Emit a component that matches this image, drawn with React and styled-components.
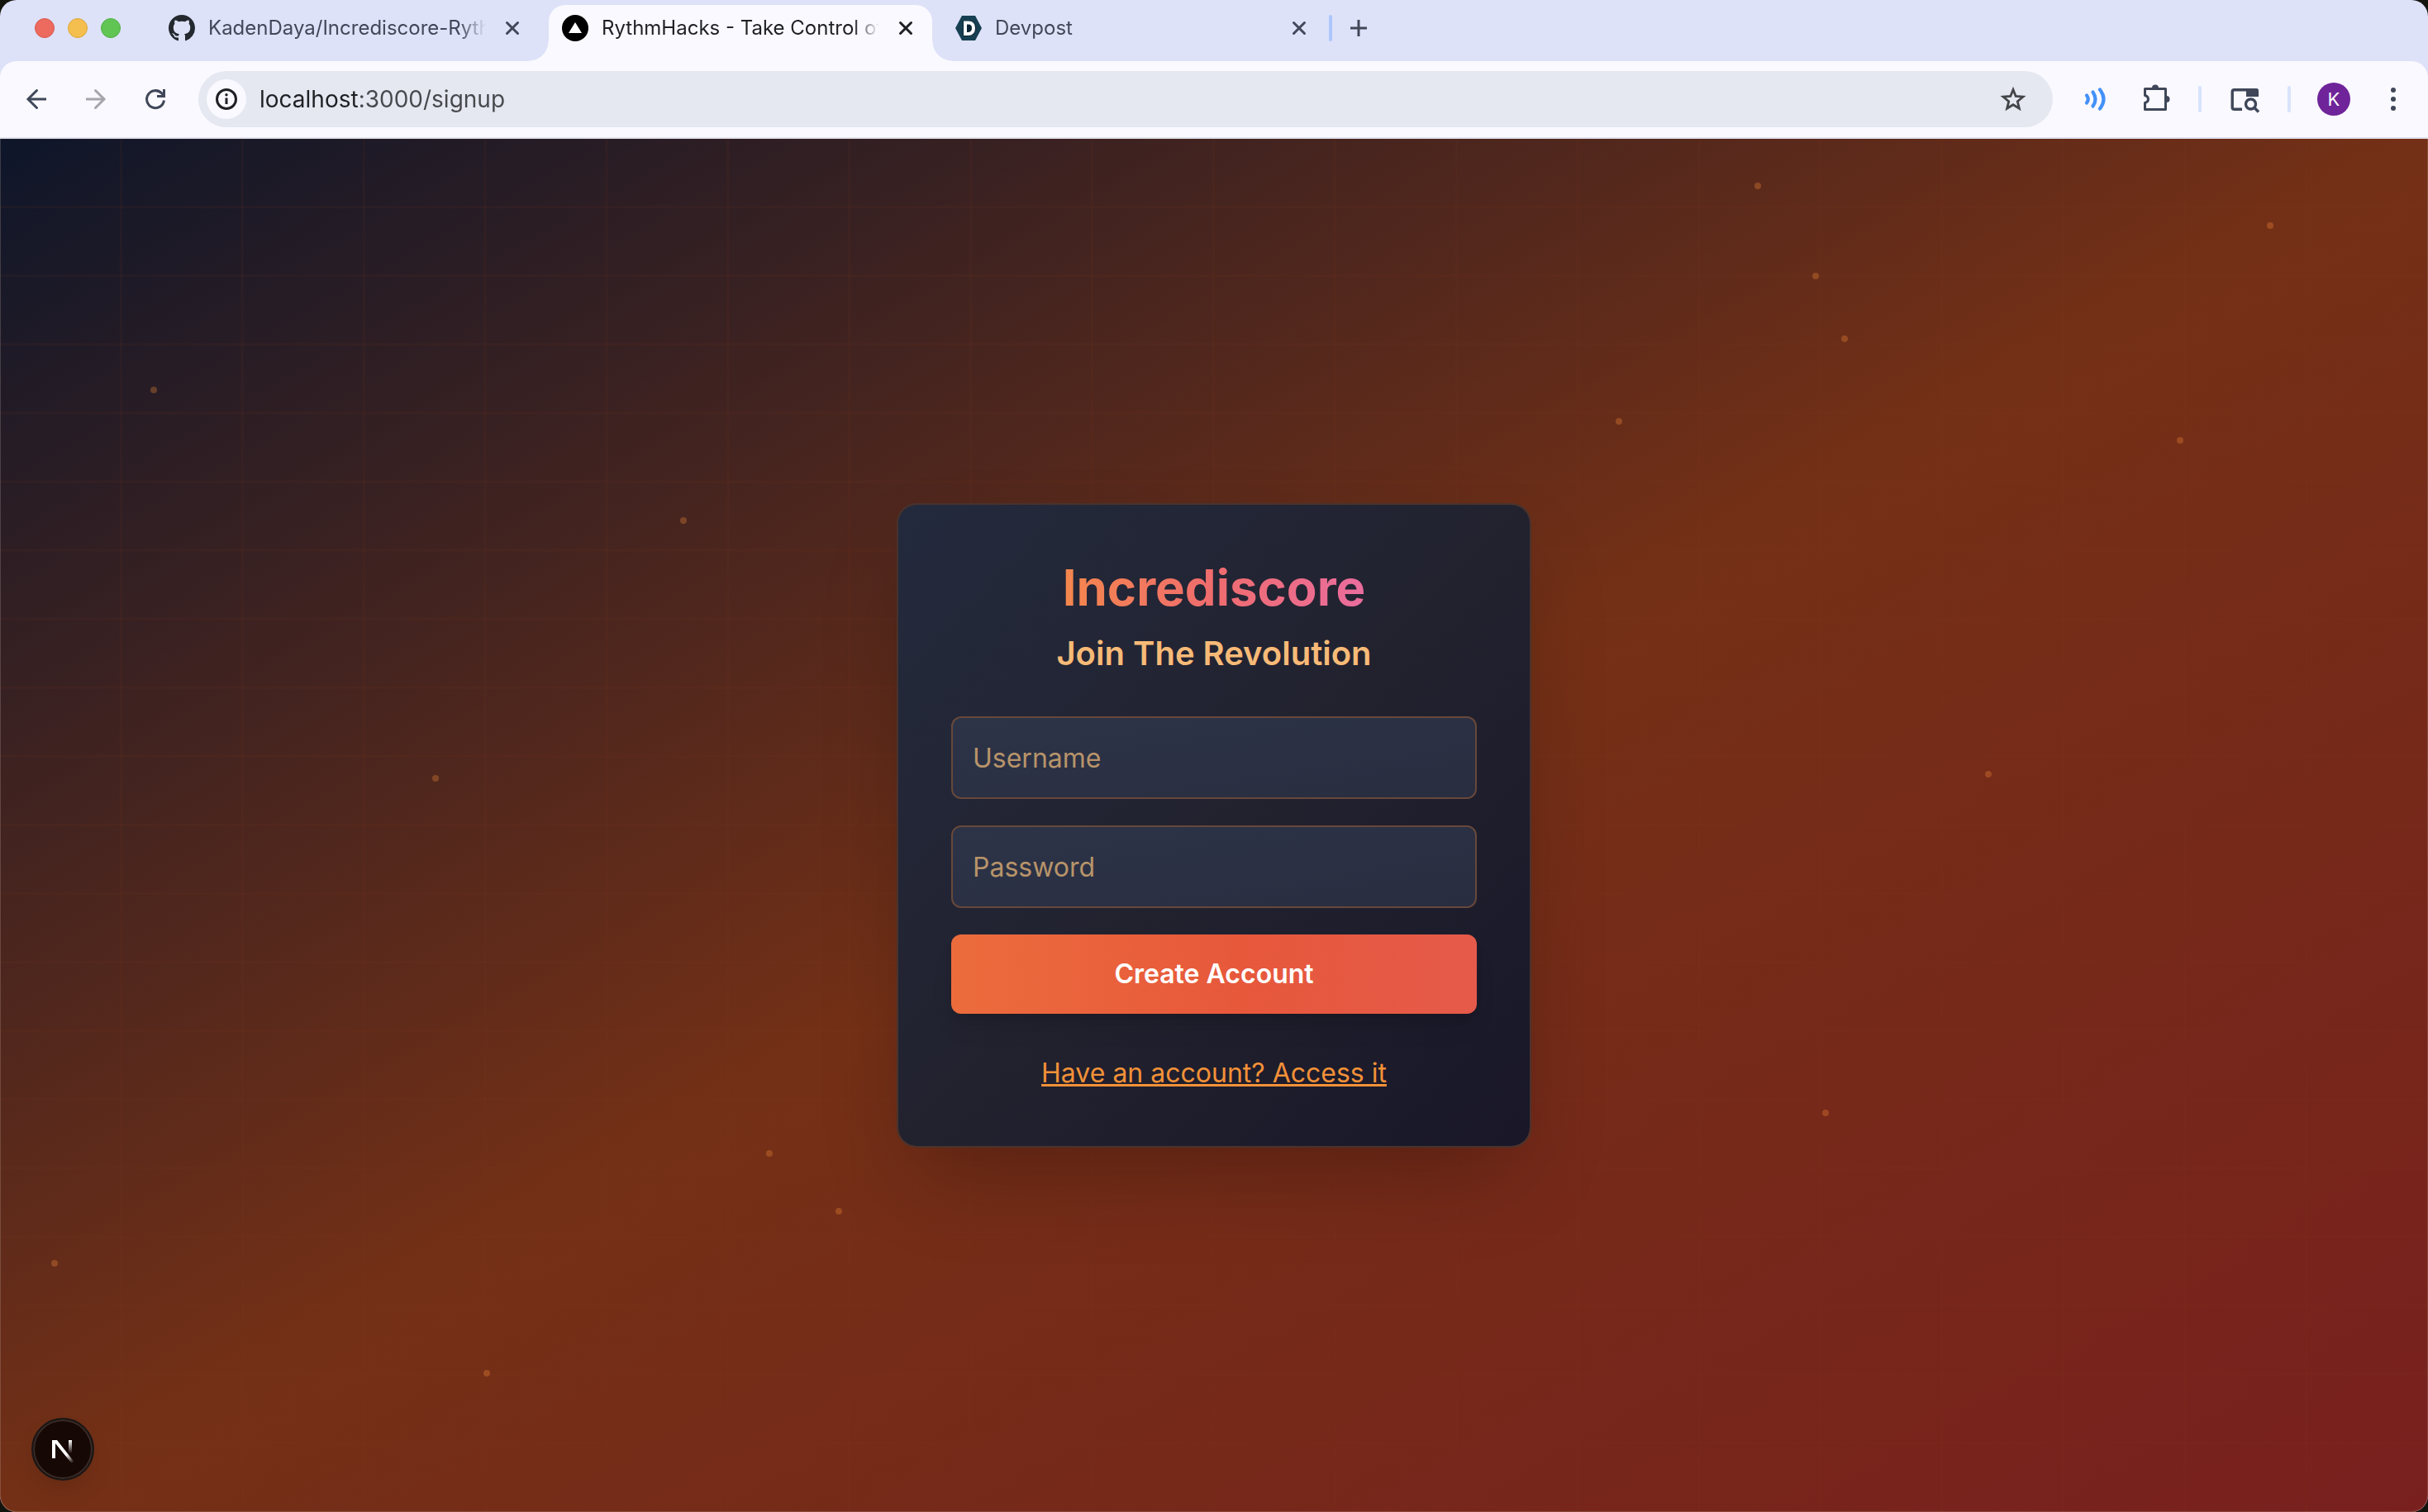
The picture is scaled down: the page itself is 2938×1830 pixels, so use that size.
import React from 'react';
import styled, { createGlobalStyle } from 'styled-components';

const GlobalStyle = createGlobalStyle`
  *, *::before, *::after { box-sizing: border-box; }
  body {
    margin: 0;
    background: #14140f;
    font-family: Inter, "Liberation Sans", sans-serif;
    -webkit-font-smoothing: antialiased;
  }
  button, input { font: inherit; color: inherit; }
  button { border: 0; padding: 0; background: none; cursor: pointer; }
  svg { display: block; flex: none; }
`;

const Window = styled.div`
  min-height: 100vh;
  display: flex;
  flex-direction: column;
  overflow: hidden;
  border-radius: 20px;
  background: #dde2f8;
`;

/* ---------- tab strip ---------- */

const TabStrip = styled.header`
  height: 74px;
  display: flex;
  align-items: flex-start;
  padding: 6px 42px 0;
`;

const StripItem = styled.div`
  height: 56px;
  display: flex;
  align-items: center;
`;

const WindowControls = styled(StripItem)`
  gap: 16px;
  margin-right: 42px;
`;

const Light = styled.button`
  width: 24px;
  height: 24px;
  border-radius: 50%;
  border: 1px solid ${(p) => p.$edge};
  background: ${(p) => p.$fill};
`;

const Tabs = styled.nav`
  display: flex;
  gap: 12px;
`;

const TabBox = styled.div`
  position: relative;
  width: 464px;
  height: 68px;
  display: flex;
  align-items: center;
  gap: 16px;
  padding: 0 16px 12px;
  color: ${(p) => (p.$active ? '#1f2024' : '#434759')};
  background: ${(p) => (p.$active ? '#faf9ff' : 'transparent')};
  border-radius: 20px 20px 0 0;

  &::before,
  &::after {
    content: '';
    display: ${(p) => (p.$active ? 'block' : 'none')};
    position: absolute;
    bottom: 0;
    width: 24px;
    height: 24px;
  }
  &::before {
    right: 100%;
    background: radial-gradient(circle at 0 0, transparent 23px, #faf9ff 24px);
  }
  &::after {
    left: 100%;
    background: radial-gradient(circle at 100% 0, transparent 23px, #faf9ff 24px);
  }
`;

const TabTitle = styled.button`
  flex: 1;
  min-width: 0;
  overflow: hidden;
  text-align: left;
  white-space: nowrap;
  font-size: 24px;
  line-height: 32px;
  mask-image: linear-gradient(to left, transparent, #000 32px);
`;

const IconButton = styled.button`
  width: ${(p) => p.$size || 40}px;
  height: ${(p) => p.$size || 40}px;
  flex: none;
  display: flex;
  align-items: center;
  justify-content: center;
  color: ${(p) => p.$color || '#3f4759'};
`;

const Divider = styled.span`
  flex: none;
  width: 4px;
  height: 32px;
  border-radius: 2px;
  background: ${(p) => p.$color};
`;

const StripEnd = styled(StripItem)`
  gap: 16px;
  margin-left: 4px;
`;

/* ---------- toolbar ---------- */

const Toolbar = styled.div`
  height: 94px;
  display: flex;
  align-items: center;
  gap: 32px;
  padding: 0 22px 0 24px;
  background: #faf9ff;
  border-bottom: 2px solid #e0e2ee;
  border-radius: 20px 20px 0 0;
`;

const Omnibox = styled.form`
  flex: 1;
  height: 68px;
  display: flex;
  align-items: center;
  gap: 16px;
  padding: 0 28px 0 10px;
  border-radius: 34px;
  background: #e5e8f1;
`;

const SiteInfo = styled(IconButton)`
  border-radius: 50%;
  background: #faf9ff;
`;

const Address = styled.input`
  flex: 1;
  min-width: 0;
  padding: 0;
  border: 0;
  outline: 0;
  font-size: 28px;
  line-height: 40px;
  color: transparent;
  background: linear-gradient(to right, #1f2024 120px, #47484c 120px);
  background-clip: text;
`;

const Avatar = styled.button`
  width: 40px;
  height: 40px;
  flex: none;
  border-radius: 50%;
  background: #6f2599;
  color: #fff;
  font-size: 22px;
  line-height: 40px;
  text-align: center;
`;

/* ---------- page ---------- */

const Page = styled.main`
  position: relative;
  flex: 1;
  display: flex;
  align-items: center;
  justify-content: center;
  background:
    linear-gradient(to left, rgba(126, 54, 26, 0.09) 3px, transparent 3px) 1px 0 / 5% 100%,
    linear-gradient(to top, rgba(126, 54, 26, 0.09) 3px, transparent 3px) 0 1px / 100% 5%,
    linear-gradient(to bottom right, #0e162a, #743016 50%, #79201e);

  &::after {
    content: '';
    position: absolute;
    inset: 0;
    border: solid rgba(255, 255, 255, 0.15);
    border-width: 0 1px 1px;
    border-radius: 0 0 20px 20px;
    pointer-events: none;
  }
`;

const Particle = styled.span`
  position: absolute;
  left: ${(p) => p.$x}%;
  top: ${(p) => p.$y}%;
  width: 8px;
  height: 8px;
  border-radius: 50%;
  background: rgba(251, 146, 60, 0.3);
`;

const Card = styled.section`
  width: 768px;
  padding: 64px;
  display: flex;
  flex-direction: column;
  align-items: center;
  border: 2px solid rgba(70, 52, 48, 0.9);
  border-radius: 24px;
  background: linear-gradient(to bottom right, #232a3d, #22222f 50%, #191728) padding-box;
  box-shadow: 0 50px 100px -24px rgba(0, 0, 0, 0.25);
`;

const Title = styled.h1`
  margin: 0 0 16px;
  font-size: 60px;
  line-height: 72px;
  font-weight: 700;
  color: transparent;
  background: linear-gradient(to right, #f4874d, #ef6c6e 50%, #ea6d9e);
  background-clip: text;
`;

const Subtitle = styled.h2`
  margin: 0 0 48px;
  font-size: 40px;
  line-height: 56px;
  font-weight: 600;
  color: #f7ba77;
`;

const Form = styled.form`
  width: 100%;
  display: flex;
  flex-direction: column;
  gap: 32px;
  margin-bottom: 48px;
`;

const Field = styled.input`
  width: 100%;
  height: 100px;
  padding: 24px;
  border: 2px solid #67483a;
  border-radius: 12px;
  outline: 0;
  background: linear-gradient(to bottom right, #2d3448, #292d40);
  font-size: 32px;
  line-height: 48px;
  color: #f7ba77;

  &::placeholder {
    color: #b8946a;
    opacity: 1;
  }
`;

const Submit = styled.button`
  height: 96px;
  border-radius: 12px;
  font-size: 32px;
  line-height: 48px;
  font-weight: 600;
  color: #fff;
  background: linear-gradient(to right, #ec6c3c, #e7583b 55%, #e55a4a);
  box-shadow: 0 20px 30px -6px rgba(0, 0, 0, 0.1), 0 8px 12px -4px rgba(0, 0, 0, 0.1);
`;

const AccessLink = styled.a`
  font-size: 32px;
  line-height: 48px;
  color: #f39138;
  text-decoration: underline;
`;

const DevBadge = styled.button`
  position: absolute;
  left: 38px;
  bottom: 38px;
  width: 76px;
  height: 76px;
  display: flex;
  align-items: center;
  justify-content: center;
  border-radius: 50%;
  border: 2px solid #1a1716;
  background: #160804;
  box-shadow: inset 0 0 0 2px #3a2b27, 0 16px 32px -8px rgba(0, 0, 0, 0.16);
`;

/* ---------- icons ---------- */

const stroke = { fill: 'none', stroke: 'currentColor', strokeWidth: 3 };

const CloseIcon = () => (
  <svg width="32" height="32" viewBox="0 0 32 32" {...stroke} strokeLinecap="round">
    <path d="M9.5 9.5l13 13M22.5 9.5l-13 13" />
  </svg>
);

const PlusIcon = () => (
  <svg width="32" height="32" viewBox="0 0 32 32" {...stroke}>
    <path d="M16 6v20M6 16h20" />
  </svg>
);

const GithubIcon = () => (
  <svg width="32" height="32" viewBox="0 0 16 16" fill="#24292f">
    <path d="M8 0C3.58 0 0 3.58 0 8c0 3.54 2.29 6.53 5.47 7.59.4.07.55-.17.55-.38 0-.19-.01-.82-.01-1.49-2.01.37-2.53-.49-2.69-.94-.09-.23-.48-.94-.82-1.13-.28-.15-.68-.52-.01-.53.63-.01 1.08.58 1.23.82.72 1.21 1.87.87 2.33.66.07-.52.28-.87.51-1.07-1.78-.2-3.64-.89-3.64-3.95 0-.87.31-1.59.82-2.15-.08-.2-.36-1.02.08-2.12 0 0 .67-.21 2.2.82.64-.18 1.32-.27 2-.27s1.36.09 2 .27c1.53-1.04 2.2-.82 2.2-.82.44 1.1.16 1.92.08 2.12.51.56.82 1.27.82 2.15 0 3.07-1.87 3.75-3.65 3.95.29.25.54.73.54 1.48 0 1.07-.01 1.93-.01 2.2 0 .21.15.46.55.38A8.01 8.01 0 0016 8c0-4.42-3.58-8-8-8z" />
  </svg>
);

const TriangleIcon = () => (
  <svg width="32" height="32" viewBox="0 0 32 32">
    <circle cx="16" cy="16" r="16" />
    <path d="M16 9l8 13H8z" fill="#fff" />
  </svg>
);

const DevpostIcon = () => (
  <svg width="32" height="32" viewBox="0 0 32 32">
    <path d="M8 1h16l8 15-8 15H8L0 16z" fill="#173f52" />
    <path d="M9 7h7q9 0 9 9t-9 10H9z" fill="#0b2536" />
    <path d="M12 9.500h4q6 0 6 6.500t-6 7h-4z" fill="none" stroke="#fff" strokeWidth="4" />
  </svg>
);

const BackIcon = () => (
  <svg width="40" height="40" viewBox="0 0 40 40" {...stroke}>
    <path d="M32 20H10" />
    <path d="M20.500 9.500L10 20l10.500 10.500" strokeLinecap="round" />
  </svg>
);

const ForwardIcon = () => (
  <svg width="40" height="40" viewBox="0 0 40 40" {...stroke}>
    <path d="M8 20h22" />
    <path d="M19.500 9.500L30 20 19.500 30.500" strokeLinecap="round" />
  </svg>
);

const ReloadIcon = () => (
  <svg width="40" height="40" viewBox="0 0 40 40" {...stroke}>
    <path d="M30.500 21.500A10.500 10.500 0 1 1 27.400 12.600L30 15.500" />
    <path d="M30.500 8v8.500H22" />
  </svg>
);

const InfoIcon = () => (
  <svg width="28" height="28" viewBox="0 0 28 28" {...stroke}>
    <circle cx="14" cy="14" r="11.500" />
    <path d="M14 12.500v7.500" />
    <circle cx="14" cy="8.800" r="1.700" fill="currentColor" stroke="none" />
  </svg>
);

const StarIcon = () => (
  <svg width="40" height="40" viewBox="0 0 40 40" {...stroke} strokeWidth="2.800" strokeMiterlimit="10">
    <path d="M20 8.500l3.200 8 8.800.7-6.700 5.600 2.100 8.400-7.400-4.500-7.400 4.500 2.100-8.400-6.700-5.600 8.800-.7z" />
  </svg>
);

const WavesIcon = () => (
  <svg width="40" height="40" viewBox="0 0 40 40" {...stroke} strokeWidth="4.200" strokeLinecap="round">
    <path d="M9 15.500Q12.500 20 9 24.500" />
    <path d="M16.500 11.500Q22.500 20 16.500 28.500" />
    <path d="M25 8.500Q34 20 25 31.500" />
  </svg>
);

const PuzzleIcon = () => (
  <svg width="40" height="40" viewBox="0 0 40 40" {...stroke} strokeLinejoin="round">
    <path d="M7.500 7.500h25v25h-25v-8q4-1 4-4.500t-4-4.500z" />
    <path d="M16 6.500a4 4 0 0 1 8 0zM33.500 16a4 4 0 0 1 0 8z" fill="currentColor" stroke="none" />
  </svg>
);

const TabSearchIcon = () => (
  <svg width="40" height="40" viewBox="0 0 40 40" {...stroke} strokeWidth="3.400">
    <path d="M17 32.300H7.500q-2.300 0-2.300-2.300V11q0-2.300 2.300-2.300H34" />
    <path d="M22 7h12.500q2.500 0 2.500 2.500V17H22z" fill="currentColor" stroke="none" />
    <circle cx="27.500" cy="26" r="6" />
    <path d="M31.500 30l5.500 5.500" />
  </svg>
);

const MenuIcon = () => (
  <svg width="40" height="40" viewBox="0 0 40 40" fill="currentColor">
    <circle cx="20" cy="9" r="3" />
    <circle cx="20" cy="20" r="3" />
    <circle cx="20" cy="31" r="3" />
  </svg>
);

const NextIcon = () => (
  <svg width="72" height="72" viewBox="0 0 72 72">
    <defs>
      <linearGradient id="slash" x1="41" y1="42" x2="49" y2="52" gradientUnits="userSpaceOnUse">
        <stop stopColor="#fff" />
        <stop offset="1" stopColor="#fff" stopOpacity="0" />
      </linearGradient>
      <linearGradient id="stem" x1="0" y1="25" x2="0" y2="41" gradientUnits="userSpaceOnUse">
        <stop stopColor="#fff" />
        <stop offset="1" stopColor="#fff" stopOpacity="0" />
      </linearGradient>
    </defs>
    <path d="M23 25h6l20.500 26-2.500 2.500L27 29v18h-4z" fill="url(#slash)" />
    <path d="M43 25h4v16h-4z" fill="url(#stem)" />
  </svg>
);

/* ---------- data ---------- */

const tabs = [
  { title: 'KadenDaya/Incrediscore-Ryth', Icon: GithubIcon },
  { title: 'RythmHacks - Take Control of', Icon: TriangleIcon, active: true },
  { title: 'Devpost', Icon: DevpostIcon },
];

const particles = [
  [6.2, 18.05], [28, 27.55], [72.25, 3.2], [74.65, 9.75], [75.85, 14.3],
  [93.35, 6.07], [89.65, 21.7], [66.55, 20.35], [17.8, 46.35], [81.75, 46],
  [75.05, 70.7], [31.55, 73.65], [34.4, 77.85], [2.1, 81.65], [19.9, 89.65],
];

export default function App() {
  return (
    <Window>
      <GlobalStyle />
      <TabStrip>
        <WindowControls>
          <Light aria-label="Close window" $fill="#ed6a5e" $edge="#d8584d" />
          <Light aria-label="Minimize window" $fill="#f5bf4f" $edge="#dba73a" />
          <Light aria-label="Zoom window" $fill="#61c554" $edge="#4fae43" />
        </WindowControls>
        <Tabs>
          {tabs.map(({ title, Icon, active }) => (
            <TabBox key={title} $active={active}>
              <Icon />
              <TabTitle>{title}</TabTitle>
              <IconButton aria-label="Close tab" $size={32} $color="inherit">
                <CloseIcon />
              </IconButton>
            </TabBox>
          ))}
        </Tabs>
        <StripEnd>
          <Divider $color="#adc6fc" />
          <IconButton aria-label="New tab" $size={32} $color="#434759">
            <PlusIcon />
          </IconButton>
        </StripEnd>
      </TabStrip>

      <Toolbar>
        <IconButton aria-label="Back"><BackIcon /></IconButton>
        <IconButton aria-label="Forward" $color="#a5a5ab"><ForwardIcon /></IconButton>
        <IconButton aria-label="Reload"><ReloadIcon /></IconButton>
        <Omnibox onSubmit={(e) => e.preventDefault()}>
          <SiteInfo type="button" aria-label="Site information" $size={48} $color="#1f2024">
            <InfoIcon />
          </SiteInfo>
          <Address aria-label="Address" defaultValue="localhost:3000/signup" spellCheck={false} />
          <IconButton type="button" aria-label="Bookmark" $color="#444549"><StarIcon /></IconButton>
        </Omnibox>
        <IconButton aria-label="Audio" $color="#4391f8"><WavesIcon /></IconButton>
        <IconButton aria-label="Extensions"><PuzzleIcon /></IconButton>
        <Divider $color="#d8e3fc" />
        <IconButton aria-label="Search tabs"><TabSearchIcon /></IconButton>
        <Divider $color="#d8e3fc" />
        <Avatar aria-label="Profile">K</Avatar>
        <IconButton aria-label="Menu"><MenuIcon /></IconButton>
      </Toolbar>

      <Page>
        {particles.map(([x, y]) => (
          <Particle key={`${x}-${y}`} $x={x} $y={y} />
        ))}
        <Card>
          <Title>Incrediscore</Title>
          <Subtitle>Join The Revolution</Subtitle>
          <Form onSubmit={(e) => e.preventDefault()}>
            <Field type="text" placeholder="Username" aria-label="Username" />
            <Field type="password" placeholder="Password" aria-label="Password" />
            <Submit>Create Account</Submit>
          </Form>
          <AccessLink href="#login">Have an account? Access it</AccessLink>
        </Card>
        <DevBadge aria-label="Open developer tools"><NextIcon /></DevBadge>
      </Page>
    </Window>
  );
}
